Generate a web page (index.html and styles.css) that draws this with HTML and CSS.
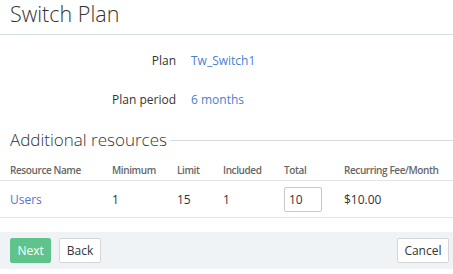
FILE: index.html
```html
<!DOCTYPE html>
<html lang="en">
<head>
  <meta charset="UTF-8" />
  <title>Switch Plan</title>
  <link rel="stylesheet" href="styles.css">
</head>
<body>
  <div class="page-header">
    <h1>Switch Plan</h1>
  </div>

  <div class="details">
    <div class="detail-row">
      <span class="detail-label">Plan</span>
      <a class="detail-value" href="#">Tw_Switch1</a>
    </div>
    <div class="detail-row">
      <span class="detail-label">Plan period</span>
      <a class="detail-value" href="#">6 months</a>
    </div>
  </div>

  <div class="section-title">
    <h2>Additional resources</h2>
    <span class="section-line"></span>
  </div>

  <table class="resources">
    <thead>
      <tr>
        <th class="col-name">Resource Name</th>
        <th class="col-min">Minimum</th>
        <th class="col-limit">Limit</th>
        <th class="col-incl">Included</th>
        <th class="col-total">Total</th>
        <th>Recurring Fee/Month</th>
      </tr>
    </thead>
    <tbody>
      <tr>
        <td><a class="user-link" href="#">Users</a></td>
        <td>1</td>
        <td>15</td>
        <td>1</td>
        <td><input class="qty" type="text" value="10"></td>
        <td>$10.00</td>
      </tr>
    </tbody>
  </table>

  <div class="footer">
    <div class="footer-left">
      <button class="btn btn-primary">Next</button>
      <button class="btn">Back</button>
    </div>
    <button class="btn">Cancel</button>
  </div>
</body>
</html>
```

FILE: styles.css
```css
body {
  margin: 0;
  font-family: 'Open Sans', sans-serif;
  font-size: 12px;
  color: #333;
  background: #fff;
}

a {
  color: #4a7fd2;
  text-decoration: none;
}

.user-link {
  color: #5a72d0;
}

.page-header {
  height: 34px;
  border-bottom: 1px solid #d5dde5;
  padding: 0 10px;
}

h1 {
  margin: 0;
  font-size: 21.5px;
  font-weight: 300;
  line-height: 28px;
}

.details {
  padding-top: 16px;
}

.detail-row {
  display: flex;
  gap: 15px;
  height: 39px;
  line-height: 20px;
}

.detail-label {
  width: 176px;
  text-align: right;
}

.section-title {
  display: flex;
  align-items: center;
  gap: 3px;
  padding-left: 10px;
  margin-top: -1px;
}

h2 {
  margin: 0;
  font-size: 17px;
  font-weight: 300;
  line-height: 24px;
}

.section-line {
  flex: 1;
  border-top: 1px solid #d8d8de;
  margin-top: 1px;
}

.resources {
  width: 100%;
  border-collapse: collapse;
  margin-top: 5px;
}

.resources th {
  text-align: left;
  font-size: 10px;
  font-weight: 600;
  letter-spacing: -0.4px;
  color: #666;
  padding: 6px 0 3px;
  border-bottom: 1px solid #e3e3e3;
}

.resources td {
  padding: 6px 0 5px;
  border-bottom: 1px solid #e3e3e3;
  line-height: 20px;
  vertical-align: middle;
}

.resources th:first-child,
.resources td:first-child {
  padding-left: 10px;
}

.col-name { width: 102px; }
.col-min { width: 65px; }
.col-limit { width: 46px; }
.col-incl { width: 61px; }
.col-total { width: 60px; }

.qty {
  display: block;
  width: 28px;
  height: 21px;
  margin: 0;
  padding: 1px 4px;
  border: 1px solid #c8c8c8;
  border-radius: 2px;
  font-family: 'Open Sans', sans-serif;
  font-size: 12px;
  color: #333;
}

.footer {
  margin-top: 14px;
  background: #f0f3f6;
  display: flex;
  justify-content: space-between;
  padding: 6px 4px 6px 10px;
}

.footer-left {
  display: flex;
  gap: 8px;
}

.btn {
  height: 25px;
  padding: 0 6.5px;
  background: #fff;
  border: 1px solid #d6d6d6;
  border-radius: 2px;
  font-family: 'Open Sans', sans-serif;
  font-size: 12px;
  color: #333;
}

.btn-primary {
  background: #5ec48c;
  border-color: #5ec48c;
  color: #fff;
}
```
